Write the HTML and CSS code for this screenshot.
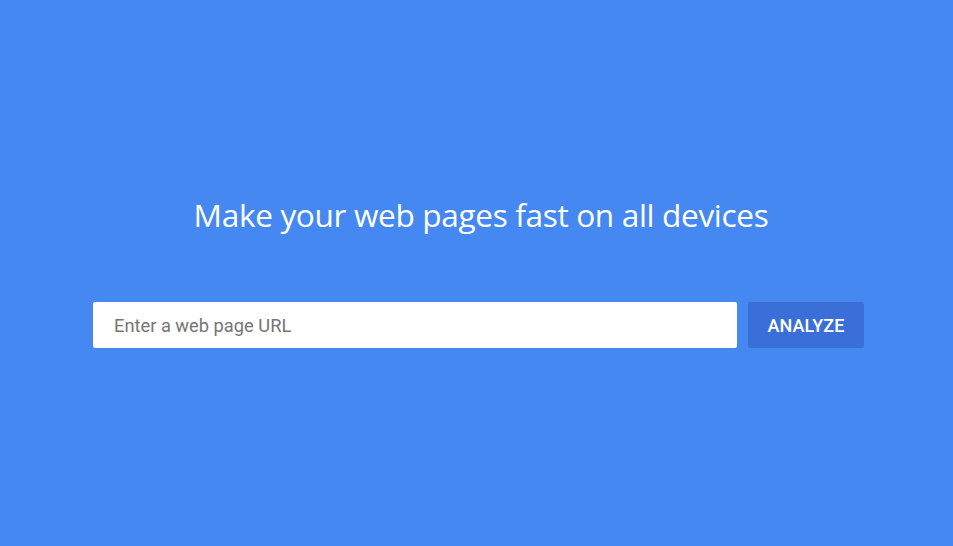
FILE: index.html
```html
<!DOCTYPE html>
<html lang="en">
<head>
<meta charset="utf-8">
<title>PageSpeed Insights</title>
<link rel="stylesheet" href="styles.css">
</head>
<body>
<main class="hero">
  <h1 class="title">Make your web pages fast on all devices</h1>
  <form class="analyze-form">
    <input class="url-input" type="text" placeholder="Enter a web page URL">
    <button class="analyze-btn" type="button">Analyze</button>
  </form>
</main>
</body>
</html>
```

FILE: styles.css
```css
html, body {
  margin: 0;
  height: 100%;
}
body {
  background: #4688f1;
  font-family: Roboto, "Open Sans", sans-serif;
}
.hero {
  display: flex;
  flex-direction: column;
  align-items: center;
  padding-top: 193px;
}
.title {
  margin: 0;
  padding-left: 9px;
  color: #fff;
  font-family: "Open Sans", Roboto, sans-serif;
  font-weight: 400;
  font-size: 31.6px;
  line-height: 44px;
  letter-spacing: -0.35px;
}
.analyze-form {
  display: flex;
  gap: 11px;
  margin-top: 65px;
  margin-left: 4px;
  width: 771px;
}
.url-input {
  flex: 1;
  height: 46px;
  box-sizing: border-box;
  border: none;
  border-radius: 2px;
  padding: 0 21px;
  font-family: Roboto, sans-serif;
  font-size: 18.3px;
  color: #333;
  background: #fff;
  outline: none;
}
.url-input::placeholder {
  color: #757575;
}
.analyze-btn {
  width: 116px;
  height: 46px;
  border: none;
  border-radius: 2px;
  background: #3b6fd8;
  color: #fff;
  font-family: Roboto, sans-serif;
  font-size: 18px;
  font-weight: 500;
  text-transform: uppercase;
  letter-spacing: 0.1px;
  cursor: pointer;
}
```
